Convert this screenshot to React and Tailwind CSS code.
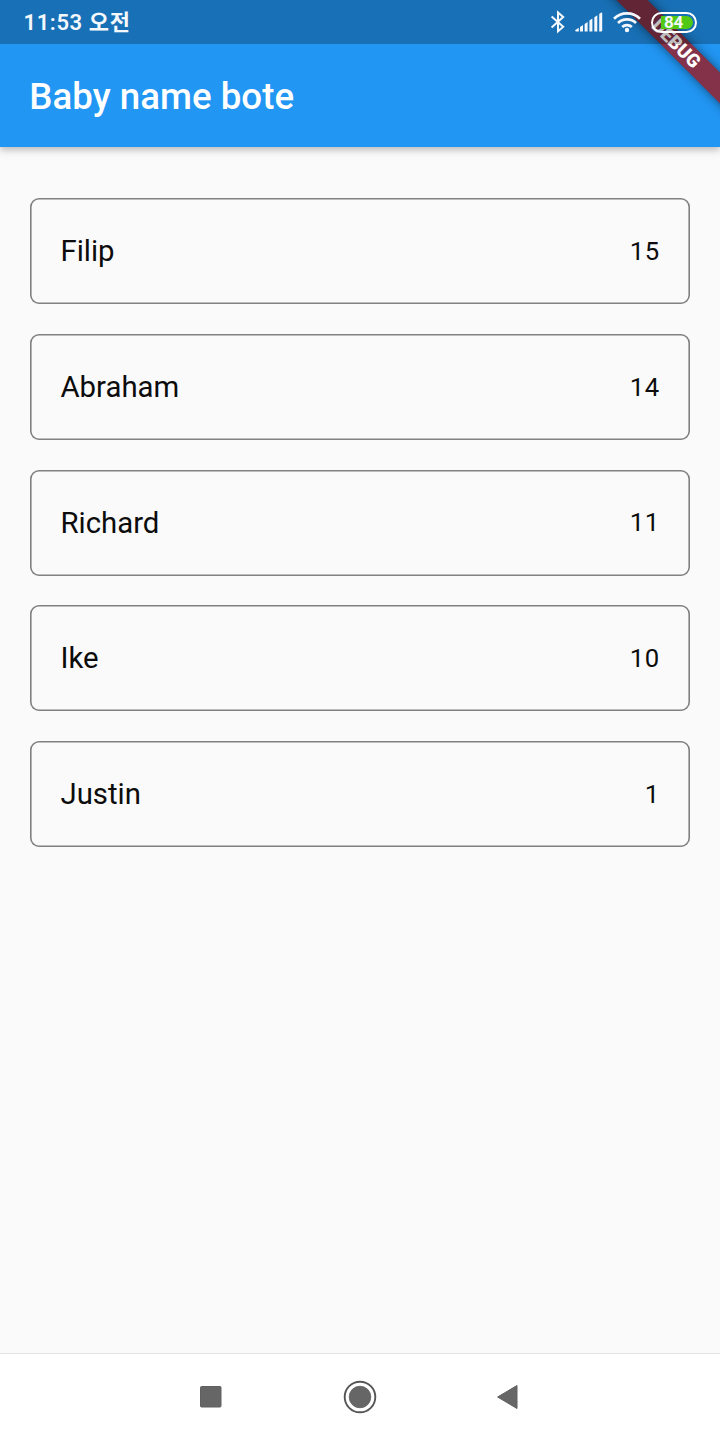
const names = [
  { name: 'Filip', votes: 15 },
  { name: 'Abraham', votes: 14 },
  { name: 'Richard', votes: 11 },
  { name: 'Ike', votes: 10 },
  { name: 'Justin', votes: 1 },
];

function BluetoothIcon() {
  return (
    <svg className="h-[24px] w-[16px]" viewBox="0 0 16 24" fill="none" stroke="currentColor" strokeWidth="2">
      <path d="M1.6 6.4 13.2 16.8 8 21.4V2.4l5.2 4.7L1.6 17.6" />
    </svg>
  );
}

function SignalIcon() {
  return (
    <svg className="h-[20px] w-[28px]" viewBox="0 0 28 20" fill="currentColor">
      <path d="M0.3 18 3.8 15.8V19.5H1Q-0.3 19 0.3 18Z" />
      <path d="M5 15 8 13v6.5H5Z" />
      <path d="M9.6 12 12.6 10v9.5h-3Z" />
      <path d="M14.4 8.6 17.4 6.6v12.9h-3Z" />
      <path d="M19.3 5.2 22.3 3.2v16.3h-3Z" />
      <path d="M24.2 2 26.2 0.5q1-.3 1 .6v17.4q0 1-1 1h-2Z" />
    </svg>
  );
}

function WifiIcon() {
  return (
    <svg className="h-[22px] w-[28px]" viewBox="0 0 28 22" fill="none" stroke="currentColor" strokeWidth="2.7">
      <path d="M1 7.8a18.5 18.5 0 0 1 26 0" />
      <path d="M5 12a12.8 12.8 0 0 1 18 0" />
      <path d="M9.2 16a7 7 0 0 1 9.6 0" />
      <circle cx="14" cy="19" r="2.2" fill="currentColor" stroke="none" />
    </svg>
  );
}

function Battery() {
  return (
    <div className="flex h-[21px] w-[46px] items-center rounded-full border-2 border-white p-[2px]">
      <div className="flex h-[13px] w-full items-center justify-center rounded-full bg-linear-to-r from-transparent from-16% to-[#50c814] to-16% pr-[1px] text-[17px] leading-none font-bold tracking-[-0.3px]">
        84
      </div>
    </div>
  );
}

function StatusBar() {
  return (
    <div className="absolute inset-x-0 top-0 flex h-[44px] items-center justify-between bg-black/25 pr-[23px] pl-[23.5px] text-[#f4f8fc]">
      <div className="pt-[2px] text-[22px] leading-none font-semibold tracking-[0.6px]">11:53 오전</div>
      <div className="flex items-center">
        <BluetoothIcon />
        <div className="ml-[9px]"><SignalIcon /></div>
        <div className="ml-[10px]"><WifiIcon /></div>
        <div className="ml-[10px]"><Battery /></div>
      </div>
    </div>
  );
}

function DebugBanner() {
  return (
    <div className="absolute top-0 right-0 h-[147px] w-[147px] overflow-hidden">
      <div className="absolute top-[33px] left-[3px] flex h-[22px] w-[200px] rotate-45 items-center justify-center bg-[#833249] text-[18.7px] leading-none font-black text-white shadow-[0_0_11px_rgba(0,0,0,0.5)]">
        DEBUG
      </div>
    </div>
  );
}

export default function App() {
  return (
    <div className="relative flex h-[1440px] w-[720px] flex-col overflow-hidden bg-[#fafafa] font-['Roboto','Noto_Sans_CJK_KR',sans-serif]">
      <header className="flex h-[146.67px] shrink-0 items-center bg-[#2196f3] pt-[48px] pl-[29.33px] shadow-[0_3px_7px_rgba(0,0,0,0.26)]">
        <h1 className="text-[36.67px] leading-none font-medium tracking-[0.02px] text-white">Baby name bote</h1>
      </header>
      <main className="flex flex-1 flex-col gap-[29.67px] px-[29.6px] pt-[51.6px]">
        {names.map((item) => (
          <div
            key={item.name}
            className="flex h-[106px] items-center justify-between rounded-[9px] px-[30.9px] text-[#0c0c0c] shadow-[inset_0_0_0_1.6px_#808080]"
          >
            <span className="pt-[2px] text-[29.33px]">{item.name}</span>
            <span className="text-[25.67px] tracking-[0.46px]">{item.votes}</span>
          </div>
        ))}
      </main>
      <nav className="flex h-[87px] shrink-0 justify-center border-t border-[#e4e4e4] bg-white">
        <div className="flex w-[320px] items-center justify-between">
          <svg className="h-[24px] w-[24px]" viewBox="0 0 24 24">
            <rect x="0.5" y="1.5" width="20.5" height="20.5" rx="1" fill="#666" stroke="#606060" />
          </svg>
          <svg className="mr-[1.5px] h-[34px] w-[34px]" viewBox="0 0 34 34">
            <circle cx="17" cy="17" r="15.3" fill="none" stroke="#555" strokeWidth="1.9" />
            <circle cx="17" cy="17" r="10.8" fill="#666" stroke="#606060" strokeWidth="0.8" />
          </svg>
          <svg className="mr-[1px] h-[26px] w-[22px]" viewBox="0 0 22 26">
            <path d="M20 1.5v23L0.6 13Z" fill="#666" stroke="#606060" strokeLinejoin="round" />
          </svg>
        </div>
      </nav>
      <DebugBanner />
      <StatusBar />
    </div>
  );
}
